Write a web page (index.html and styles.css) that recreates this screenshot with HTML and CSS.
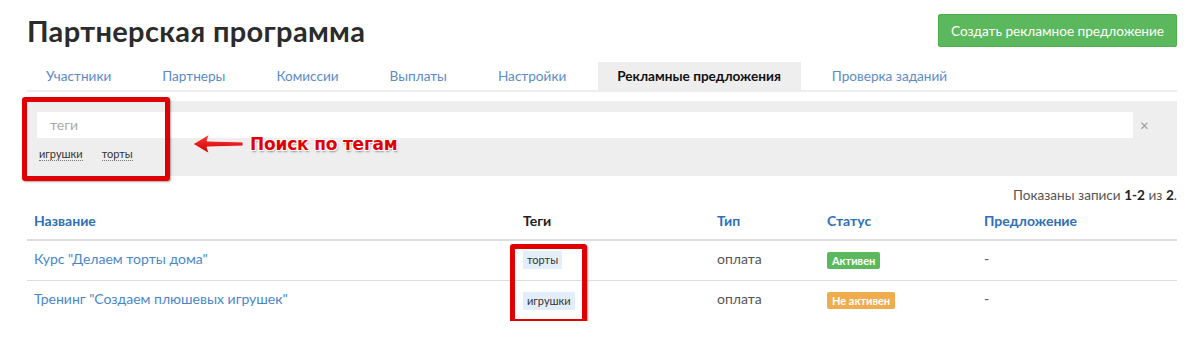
FILE: index.html
```html
<!DOCTYPE html>
<html lang="ru">
<head>
<meta charset="utf-8">
<title>Партнерская программа</title>
<link rel="stylesheet" href="styles.css">
</head>
<body>
<div class="page">
  <header class="head">
    <h1 class="title">Партнерская программа</h1>
    <button class="btn-create">Создать рекламное предложение</button>
  </header>

  <nav class="tabs">
    <a class="tab">Участники</a>
    <a class="tab">Партнеры</a>
    <a class="tab">Комиссии</a>
    <a class="tab">Выплаты</a>
    <a class="tab">Настройки</a>
    <a class="tab active">Рекламные предложения</a>
    <a class="tab">Проверка заданий</a>
  </nav>

  <section class="filter">
    <div class="filter-row">
      <div class="input">теги</div>
      <span class="clear">×</span>
    </div>
    <div class="tag-links">
      <span class="tag-link">игрушки</span>
      <span class="tag-link">торты</span>
    </div>
  </section>

  <div class="summary">Показаны записи <b>1-2</b> из <b>2</b>.</div>

  <table class="grid">
    <thead>
      <tr>
        <th class="c1"><a>Название</a></th>
        <th class="c2">Теги</th>
        <th class="c3"><a>Тип</a></th>
        <th class="c4"><a>Статус</a></th>
        <th class="c5"><a>Предложение</a></th>
      </tr>
    </thead>
    <tbody>
      <tr>
        <td><a>Курс "Делаем торты дома"</a></td>
        <td><span class="chip">торты</span></td>
        <td>оплата</td>
        <td><span class="badge ok">Активен</span></td>
        <td>-</td>
      </tr>
      <tr>
        <td><a>Тренинг "Создаем плюшевых игрушек"</a></td>
        <td><span class="chip">игрушки</span></td>
        <td>оплата</td>
        <td><span class="badge warn">Не активен</span></td>
        <td>-</td>
      </tr>
    </tbody>
  </table>

  <div class="mark mark-filter"></div>
  <div class="callout">
    <svg class="arrow" width="52" height="22" viewBox="0 0 52 22">
      <defs>
        <linearGradient id="ag" x1="0" y1="0" x2="0" y2="1">
          <stop offset="0" stop-color="#ff3b3b"/>
          <stop offset="1" stop-color="#c80000"/>
        </linearGradient>
      </defs>
      <path d="M1 11 L17 1.5 L15 8 L51 9 L51 13 L15 14 L17 20.5 Z" fill="url(#ag)" stroke="#fff" stroke-width="0.8"/>
    </svg>
    <span class="callout-text">Поиск по тегам</span>
  </div>
  <div class="mark mark-tags"></div>
</div>
</body>
</html>
```

FILE: styles.css
```css
* { box-sizing: border-box; }
body {
  margin: 0;
  background: #fff;
  font-family: Lato, "Open Sans", Arial, sans-serif;
  color: #555;
  font-size: 14px;
}
.page {
  position: relative;
  padding: 0 22px 0 27px;
}
.head {
  display: flex;
  justify-content: space-between;
  align-items: flex-start;
  padding-top: 14px;
}
.title {
  margin: 0;
  font-size: 29px;
  line-height: 34px;
  font-weight: 700;
  color: #2b2b2b;
  letter-spacing: 0.35px;
}
.btn-create {
  height: 33px;
  padding: 0 12px;
  border: 1px solid #4cae4c;
  background: #5cb85c;
  color: #fff;
  font-family: inherit;
  font-size: 13.6px;
  border-radius: 2px;
  cursor: pointer;
}
.tabs {
  display: flex;
  margin-top: 14px;
  border-bottom: 2px solid #eeeeee;
}
.tab {
  display: block;
  padding: 0 20px 0 19px;
  margin-right: 12px;
  height: 28px;
  line-height: 28px;
  color: #5b8bc9;
  font-size: 13.6px;
}
.tab.active {
  background: #eeeeee;
  color: #111;
  font-weight: 700;
}
.filter {
  margin-top: 9px;
  background: #eeeeee;
  height: 75px;
  padding: 11px 0 0 10px;
}
.filter-row {
  display: flex;
  align-items: center;
}
.input {
  width: 1096px;
  height: 26px;
  background: #fff;
  color: #aaa;
  padding-left: 13px;
  line-height: 26px;
  font-size: 14px;
}
.clear {
  margin-left: 7px;
  color: #999;
  font-size: 15px;
}
.tag-links {
  display: flex;
  gap: 19px;
  margin-top: 9px;
  padding-left: 2px;
}
.tag-link {
  font-size: 11px;
  color: #333;
  border-bottom: 1px dotted #777;
  line-height: 13px;
}
.summary {
  text-align: right;
  margin-top: 10px;
  font-size: 13.6px;
  line-height: 18px;
  color: #555;
}
.summary b { color: #222; }
.grid {
  width: 100%;
  border-collapse: collapse;
}
.grid th {
  text-align: left;
  font-weight: 700;
  padding: 7px 7px 9px;
  line-height: 19px;
  border-bottom: 2px solid #dddddd;
  color: #222;
}
.grid th a { color: #2e6fb7; }
.grid td {
  padding: 7px 7px 11px;
  line-height: 21px;
  border-top: 1px solid #dddddd;
  vertical-align: top;
}
.grid tbody tr:first-child td { border-top: 0; }
.grid td a { color: #4a87c9; }
.c1 { width: 489px; }
.c2 { width: 194px; }
.c3 { width: 110px; }
.c4 { width: 157px; }
.chip {
  display: inline-block;
  background: #e3eefb;
  color: #333;
  font-size: 11px;
  line-height: 18px;
  padding: 0 4px;
  vertical-align: middle;
}
.badge {
  display: inline-block;
  color: #fff;
  font-size: 11px;
  font-weight: 700;
  line-height: 17px;
  padding: 0 5px;
  border-radius: 2px;
  vertical-align: middle;
}
.badge.ok { background: #5cb85c; }
.badge.warn { background: #f0ad4e; }

.mark {
  position: absolute;
  border: 5px solid #e10000;
  border-radius: 3px;
  box-shadow: 1px 1px 2px rgba(0,0,0,0.35);
}
.mark-filter { left: 22px; top: 97px; width: 148px; height: 84px; }
.mark-tags { left: 510px; top: 244px; width: 77px; height: 80px; }
.callout {
  position: absolute;
  left: 192px;
  top: 133px;
  display: flex;
  align-items: center;
  gap: 6px;
}
.callout-text {
  font-family: "DejaVu Sans", Verdana, sans-serif;
  font-weight: 700;
  font-size: 17px;
  color: #e10000;
  letter-spacing: -0.2px;
  text-shadow: -1px -1px 0 #fff, 1px -1px 0 #fff, -1px 1px 0 #fff, 1px 1px 0 #fff, 1px 2px 2px rgba(0,0,0,0.4);
}
```
